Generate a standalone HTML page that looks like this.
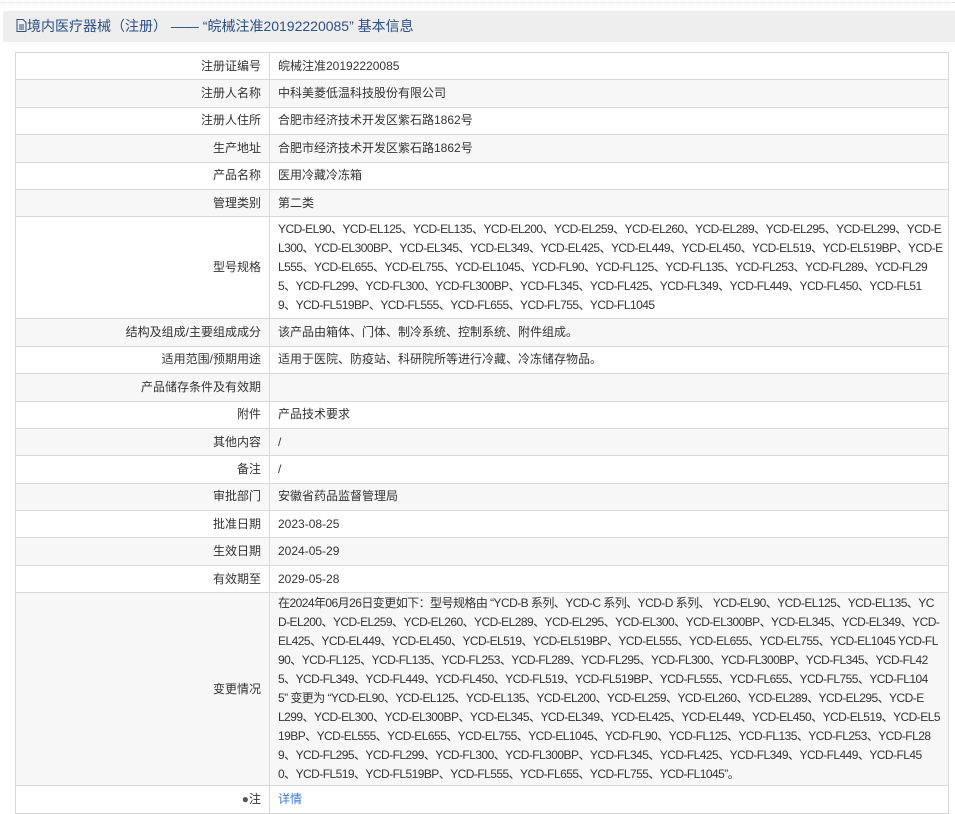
<!DOCTYPE html>
<html><head><meta charset="utf-8"><style>
body{margin:0;width:955px;height:802px;overflow:hidden;background:#fff;font-family:"Liberation Sans","Noto Sans CJK SC",sans-serif;font-size:12px;color:#333;}
.top{position:absolute;left:0;top:2px;width:955px;border-top:1px dotted #ddd;}
.hd{position:absolute;left:3px;top:11px;width:952px;height:31px;background:#eeeeee;color:#2c4f86;font-size:14px;line-height:31px;box-sizing:border-box;padding-left:13px;}
.panel{position:absolute;left:3px;top:42px;width:952px;height:760px;background:#fff;}
table{position:absolute;left:15px;top:52px;width:934px;border-collapse:collapse;table-layout:fixed;}
td{border:1px solid #d8d8d8;padding:0 8px;line-height:19px;height:26.4px;vertical-align:middle;}
td.l{text-align:right;padding-right:8px;}
tr:nth-child(even) td{background:#f7f7f7;}
td.m{padding-top:3px;padding-bottom:3px;white-space:nowrap;letter-spacing:-0.55px;}
a{color:#3a7ad5;text-decoration:none;}
</style></head><body>
<div class="top"></div>
<div class="hd"><svg width="11" height="13" viewBox="0 0 11 13" style="vertical-align:-1px"><path d="M1 .5h6l3 3v9H1z" fill="none" stroke="#2c4f86"/><path d="M3 6h5M3 8h5M3 10h5" stroke="#2c4f86"/></svg>境内医疗器械（注册） —— “皖械注准20192220085” 基本信息</div>
<div class="panel"></div>
<table>
<colgroup><col style="width:254px"><col></colgroup>
<tr><td class="l">注册证编号</td><td>皖械注准20192220085</td></tr>
<tr><td class="l">注册人名称</td><td>中科美菱低温科技股份有限公司</td></tr>
<tr><td class="l">注册人住所</td><td>合肥市经济技术开发区紫石路1862号</td></tr>
<tr><td class="l">生产地址</td><td>合肥市经济技术开发区紫石路1862号</td></tr>
<tr><td class="l">产品名称</td><td>医用冷藏冷冻箱</td></tr>
<tr><td class="l">管理类别</td><td>第二类</td></tr>
<tr><td class="l">型号规格</td><td class="m">YCD-EL90、YCD-EL125、YCD-EL135、YCD-EL200、YCD-EL259、YCD-EL260、YCD-EL289、YCD-EL295、YCD-EL299、YCD-E<br>L300、YCD-EL300BP、YCD-EL345、YCD-EL349、YCD-EL425、YCD-EL449、YCD-EL450、YCD-EL519、YCD-EL519BP、YCD-E<br>L555、YCD-EL655、YCD-EL755、YCD-EL1045、YCD-FL90、YCD-FL125、YCD-FL135、YCD-FL253、YCD-FL289、YCD-FL29<br>5、YCD-FL299、YCD-FL300、YCD-FL300BP、YCD-FL345、YCD-FL425、YCD-FL349、YCD-FL449、YCD-FL450、YCD-FL51<br>9、YCD-FL519BP、YCD-FL555、YCD-FL655、YCD-FL755、YCD-FL1045</td></tr>
<tr><td class="l">结构及组成/主要组成成分</td><td>该产品由箱体、门体、制冷系统、控制系统、附件组成。</td></tr>
<tr><td class="l">适用范围/预期用途</td><td>适用于医院、防疫站、科研院所等进行冷藏、冷冻储存物品。</td></tr>
<tr><td class="l">产品储存条件及有效期</td><td></td></tr>
<tr><td class="l">附件</td><td>产品技术要求</td></tr>
<tr><td class="l">其他内容</td><td>/</td></tr>
<tr><td class="l">备注</td><td>/</td></tr>
<tr><td class="l">审批部门</td><td>安徽省药品监督管理局</td></tr>
<tr><td class="l">批准日期</td><td>2023-08-25</td></tr>
<tr><td class="l">生效日期</td><td>2024-05-29</td></tr>
<tr><td class="l">有效期至</td><td>2029-05-28</td></tr>
<tr><td class="l">变更情况</td><td class="m" style="padding-top:1px;padding-bottom:1px">在2024年06月26日变更如下：型号规格由 “YCD-B 系列、YCD-C 系列、YCD-D 系列、 YCD-EL90、YCD-EL125、YCD-EL135、YC<br>D-EL200、YCD-EL259、YCD-EL260、YCD-EL289、YCD-EL295、YCD-EL300、YCD-EL300BP、YCD-EL345、YCD-EL349、YCD-<br>EL425、YCD-EL449、YCD-EL450、YCD-EL519、YCD-EL519BP、YCD-EL555、YCD-EL655、YCD-EL755、YCD-EL1045 YCD-FL<br>90、YCD-FL125、YCD-FL135、YCD-FL253、YCD-FL289、YCD-FL295、YCD-FL300、YCD-FL300BP、YCD-FL345、YCD-FL42<br>5、YCD-FL349、YCD-FL449、YCD-FL450、YCD-FL519、YCD-FL519BP、YCD-FL555、YCD-FL655、YCD-FL755、YCD-FL104<br>5” 变更为 “YCD-EL90、YCD-EL125、YCD-EL135、YCD-EL200、YCD-EL259、YCD-EL260、YCD-EL289、YCD-EL295、YCD-E<br>L299、YCD-EL300、YCD-EL300BP、YCD-EL345、YCD-EL349、YCD-EL425、YCD-EL449、YCD-EL450、YCD-EL519、YCD-EL5<br>19BP、YCD-EL555、YCD-EL655、YCD-EL755、YCD-EL1045、YCD-FL90、YCD-FL125、YCD-FL135、YCD-FL253、YCD-FL28<br>9、YCD-FL295、YCD-FL299、YCD-FL300、YCD-FL300BP、YCD-FL345、YCD-FL425、YCD-FL349、YCD-FL449、YCD-FL45<br>0、YCD-FL519、YCD-FL519BP、YCD-FL555、YCD-FL655、YCD-FL755、YCD-FL1045”。</td></tr>
<tr><td class="l"><span style="color:#555">●</span>注</td><td><a>详情</a></td></tr>
</table>
</body></html>
